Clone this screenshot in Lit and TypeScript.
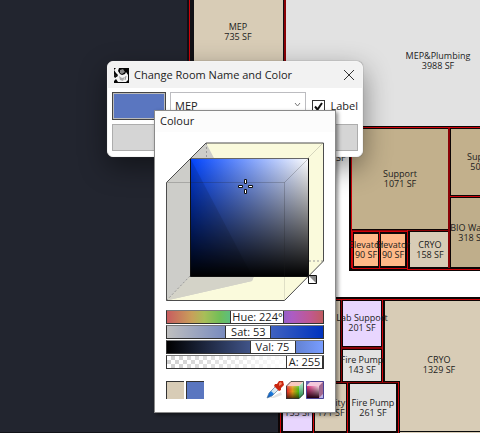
import { LitElement, html, css, svg } from "lit";
import { customElement, state } from "lit/decorators.js";
import { styleMap } from "lit/directives/style-map.js";

type Room = { x: number; y: number; w: number; h: number; fill: string };
type Tag = { x: number; y: number; name: string; area: string };

const TAN = "#d8ccb6";
const KHAKI = "#c2b08c";
const GREY = "#e2e2e2";
const LILAC = "#e8d6fe";
const ORANGE = "#ffb988";

const ROOMS: Room[] = [
  { x: 194, y: -4, w: 89, h: 130, fill: TAN },
  { x: 286, y: -4, w: 900, h: 130, fill: GREY },
  { x: 352, y: 129, w: 96, h: 100, fill: KHAKI },
  { x: 451, y: 129, w: 80, h: 66, fill: KHAKI },
  { x: 451, y: 198, w: 80, h: 69, fill: "#bfae8b" },
  { x: 354, y: 234, w: 24, h: 32, fill: ORANGE },
  { x: 381, y: 234, w: 24, h: 32, fill: ORANGE },
  { x: 410, y: 232, w: 38, h: 35, fill: TAN },
  { x: 300, y: 301, w: 40, h: 80, fill: TAN },
  { x: 343, y: 301, w: 38, h: 45, fill: LILAC },
  { x: 343, y: 350, w: 38, h: 31, fill: GREY },
  { x: 385, y: 301, w: 900, h: 80, fill: TAN },
  { x: 400, y: 380, w: 900, h: 500, fill: TAN },
  { x: 283, y: 384, w: 29, h: 47, fill: LILAC },
  { x: 315, y: 384, w: 31, h: 47, fill: TAN },
  { x: 350, y: 384, w: 46, h: 47, fill: GREY },
];

const WALLS = [
  "M189.5 0V126",
  "M340 127.5H2000", "M351.5 128V268", "M450 196.5H2000",
  "M352 231.5H407V268H352Z", "M379.5 232V268", "M407.5 230V269H2000",
  "M330 299.5H2000", "M382.5 300V382", "M398.5 382V433",
  "M280.5 384V440", "M313.5 384V433", "M347.5 383V433",
];

const SHADED_WALLS = [
  "M284.5 0V126", "M285.5 0V126", "M448.5 128V268", "M449.5 128V268", "M352 230.5H449",
  "M341.5 300V382", "M342 347.5H382", "M342 348.5H382", "M330 382.5H398",
];

const TAGS: Tag[] = [
  { x: 238, y: 30, name: "MEP", area: "735 SF" },
  { x: 438, y: 59, name: "MEP&Plumbing", area: "3988 SF" },
  { x: 332, y: 151, name: "Storage", area: "210 SF" },
  { x: 400, y: 177, name: "Support", area: "1071 SF" },
  { x: 484, y: 160, name: "Support", area: "504 SF" },
  { x: 472, y: 231, name: "BIO Waste", area: "318 SF" },
  { x: 366, y: 248, name: "Elevator", area: "90 SF" },
  { x: 393, y: 248, name: "Elevator", area: "90 SF" },
  { x: 430, y: 248, name: "CRYO", area: "158 SF" },
  { x: 362, y: 321, name: "Lab Support", area: "201 SF" },
  { x: 362, y: 363, name: "Fire Pump", area: "143 SF" },
  { x: 439, y: 363, name: "CRYO", area: "1329 SF" },
  { x: 298, y: 406, name: "Lab", area: "153 SF" },
  { x: 331, y: 406, name: "Facility", area: "171 SF" },
  { x: 373, y: 406, name: "Fire Pump", area: "261 SF" },
];

@customElement("floor-plan")
class FloorPlan extends LitElement {
  static styles = css`
    :host { display: block; overflow: hidden; }
    svg { display: block; width: 100%; height: 100%; }
    .tag { font: 9px "Open Sans", "Noto Sans", sans-serif; fill: #1c1c1c; text-anchor: middle; }
  `;
  render() {
    return html`<svg role="img" aria-label="Floor plan">
      <rect width="100%" height="100%" fill="#22252f" />
      <rect x="187" y="0" width="2000" height="128" fill="#101015" />
      <rect x="340" y="126" width="2000" height="310" fill="#fff" />
      <rect x="300" y="150" width="2000" height="280" fill="#fff" />
      <rect x="286" y="60" width="65" height="1" fill="#333" />
      <rect x="340" y="126" width="2000" height="3" fill="#0a0a0a" />
      <rect x="349" y="126" width="2000" height="145" fill="#0d0505" />
      <rect x="300" y="297" width="2000" height="85" fill="#0d0505" />
      <rect x="278" y="382" width="2000" height="52" fill="#0d0505" />
      <rect x="0" y="432" width="278" height="1" fill="#111318" />
      ${ROOMS.map((r) => svg`<rect x=${r.x} y=${r.y} width=${r.w} height=${r.h} fill=${r.fill} />`)}
      <g fill="none" stroke="#0a0a0a" shape-rendering="crispEdges">
        <path d="M384.5 301V382H399.5V434M400 431.5H2000" />
        <rect x="353.5" y="233.5" width="25" height="33" />
        <rect x="380.5" y="233.5" width="25" height="33" />
      </g>
      <g fill="none" stroke="#8a0206" shape-rendering="crispEdges">
        ${SHADED_WALLS.map((d) => svg`<path d=${d} />`)}
      </g>
      <g fill="none" stroke="#d0040a" shape-rendering="crispEdges">
        ${WALLS.map((d) => svg`<path d=${d} />`)}
      </g>
      ${TAGS.map((t) => svg`<text class="tag" x=${t.x} y=${t.y}>${t.name}<tspan x=${t.x} dy="10">${t.area}</tspan></text>`)}
    </svg>`;
  }
}

@customElement("room-dialog")
class RoomDialog extends LitElement {
  static styles = css`
    :host {
      display: block; box-sizing: border-box; overflow: hidden; border: 1px solid #f4f4f4; border-radius: 6px;
      background: #fff; box-shadow: 0 0 1px #555, 0 10px 28px rgba(0, 0, 0, 0.45);
      font: 11px/16px "Open Sans", "Noto Sans", sans-serif; color: #222;
    }
    * { box-sizing: border-box; }
    header { display: flex; align-items: center; gap: 5px; height: 26px; padding: 0 6px; background: #f2f2f2; }
    .logo { width: 15px; height: 15px; }
    h1 { flex: 1; margin: 0; font: inherit; }
    .close { border: 0; padding: 0; width: 14px; height: 14px; background: none; display: grid; place-items: center; }
    form { display: grid; gap: 4px; padding: 4px 4px 5px; }
    .row { display: flex; align-items: center; gap: 4px; }
    .chip { width: 54px; height: 28px; flex: none; background: #5a76c0; border: 1px solid #444; box-shadow: inset 0 0 0 1px #bbb; padding: 0; }
    .pick { position: relative; flex: 1; height: 28px; }
    select {
      appearance: none; width: 100%; height: 100%; border: 1px solid #bcbcc0; background: #fff;
      padding: 0 4px; border-radius: 0; font: inherit; color: #222;
    }
    .arrow { position: absolute; right: 5px; top: 10px; pointer-events: none; }
    label { display: flex; align-items: center; gap: 5px; padding-left: 2px; }
    input { appearance: none; width: 13px; height: 13px; margin: 0; border: 1px solid #333; background: #fff; }
    .box { position: relative; display: grid; }
    .box svg { position: absolute; inset: 0; pointer-events: none; }
    .wide { flex: 1; height: 27px; border: 1px solid #adadad; background: #d5d5d5; }
    .actions { gap: 5px; }
  `;
  render() {
    return html`
      <header>
        <svg class="logo" viewBox="0 0 15 15" aria-hidden="true">
          <path d="M0 0H15V15H0Z" fill="#050505" />
          <path d="M0 2L2 0H5L4 3 6 6 8 7 11 6 12 4 14 7 14 12 12 14H4L2 11 0 13V9L3 9 4 7 2 5Z" fill="#f5f5f5" />
          <path d="M6 2L9 1 11 4 8 6 6 5Z" fill="#888" />
          <path d="M5 8L8 10 11 9 9 13 6 12Z" fill="#aaa" />
          <path d="M0 6L3 8 1 10ZM12 8L11 12" fill="#111" stroke="#333" stroke-width=".5" />
        </svg>
        <h1>Change Room Name and Color</h1>
        <button class="close" aria-label="Close"><svg width="10" height="10"><path d="M0 0L10 10M10 0L0 10" stroke="#333" /></svg></button>
      </header>
      <form>
        <div class="row">
          <button type="button" class="chip" aria-label="Room colour"></button>
          <div class="pick">
            <select aria-label="Room name"><option>MEP</option></select>
            <svg class="arrow" width="7" height="6"><path d="M1 1L3.500 4 6 1" fill="none" stroke="#777" /></svg>
          </div>
          <label><span class="box"><input type="checkbox" checked /><svg width="13" height="13"><path d="M3 6.500L5.500 9.500 10 3" fill="none" stroke="#111" stroke-width="2" /></svg></span>Label</label>
        </div>
        <div class="row actions">
          <button type="button" class="wide" aria-label="OK"></button>
          <button type="button" class="wide" aria-label="Cancel"></button>
        </div>
      </form>`;
  }
}

type Channel = { key: string; text: string; value: number; max: number; width: number };

@customElement("colour-picker")
class ColourPicker extends LitElement {
  static styles = css`
    :host {
      display: block; box-sizing: border-box; border: 1px solid #8a8a8a; background: #fff;
      box-shadow: 2px 2px 4px rgba(0, 0, 0, 0.45); font: 11px/14px "Open Sans", "Noto Sans", sans-serif; color: #222;
    }
    * { box-sizing: border-box; }
    h2 { margin: 0; padding: 3px 5px 4px; font: inherit; background: #fcfcfc; }
    .body { padding: 10px 11px 13px; }
    .cube { display: block; width: 100%; height: auto; }
    .sliders { display: grid; gap: 1px; margin-top: 8px; }
    .slider { display: grid; height: 14px; border: 1px solid #333; border-top-color: #777; }
    .slider > * { grid-area: 1 / 1; min-width: 0; }
    .hue { background: linear-gradient(90deg, #c85c60, #c8a05a 16%, #a8be58 24%, #70be58 34%, #58be88 42%, #58bebe 50%, #5876c0 62%, #9060c8 74%, #ac5cc4 80%, #c05890 92%, #c05c60); }
    .sat { background: linear-gradient(90deg, #bfbfbf, #0033bf); }
    .val { background: linear-gradient(90deg, #000, #789dff); }
    .alpha { background: linear-gradient(90deg, #fff0, #fff 80%), repeating-conic-gradient(#cfcfcf 0 25%, #fff 0 50%) 0 0 / 8px 8px; }
    input { appearance: none; width: 100%; height: 12px; margin: 0; background: none; opacity: 0; }
    .over { display: flex; height: 12px; pointer-events: none; }
    output { flex: none; display: grid; place-items: center; height: 12px; line-height: 12px; background: #fff; border: solid #333; border-width: 0 1px; white-space: nowrap; }
    .foot { display: flex; gap: 2px; margin-top: 12px; }
    button { width: 18px; height: 18px; border: 0; padding: 0; background: none; }
    .swatch { border: 1px solid #333; border-width: 1px 0 0 1px; }
    .old { background: #d8ccb6; }
    .new { background: #5a76c0; }
    .gap { flex: 1; }
    .foot svg { display: block; }
  `;

  @state() private channels: Channel[] = [
    { key: "hue", text: "Hue: 224°", value: 224, max: 360, width: 54 },
    { key: "sat", text: "Sat: 53", value: 53, max: 100, width: 46 },
    { key: "val", text: "Val: 75", value: 75, max: 100, width: 46 },
    { key: "alpha", text: "A: 255", value: 255, max: 255, width: 37 },
  ];

  private cube() {
    return html`<svg class="cube" viewBox="0 0 158 160" role="img" aria-label="Saturation and value">
      <defs>
        <linearGradient id="s"><stop stop-color="#04f" /><stop offset="1" stop-color="#fff" /></linearGradient>
        <linearGradient id="v" x2="0" y2="1"><stop stop-color="#000" stop-opacity="0" /><stop offset="1" /></linearGradient>
      </defs>
      <path d="M.5 40.500L40 1H157.500V119L118.500 158.500H.5Z" fill="#fafadc" />
      <path d="M.5 40.500L40 1 48 16 88 134 86 139 .5 158.500Z" fill="#cdcdc9" />
      <path d="M24 134H88L86 139 .5 158.500Z" fill="#d4d3c8" />
      <path d="M40.500 1V16M143 119H157M24 134L.5 158.500" fill="none" stroke="#999" stroke-dasharray="2 2" />
      <path d="M157 1L142 16" stroke="#d5d5bd" />
      <path d="M118.500 134V158" stroke="#dfdfc6" />
      <path d="M24.500 16.500H142.500V134.500H24.500Z" fill="url(#s)" />
      <path d="M24.500 16.500H142.500V134.500H24.500Z" fill="url(#v)" />
      <path d="M24.500 16.500L86 134H24.500Z" fill="#000" opacity=".12" />
      <path d="M.5 40.500H118.500V134M118.500 40.500L142 17" fill="none" stroke="#222" opacity=".22" />
      <path d="M24.500 16.500H142.500V134.500H24.500Z" fill="none" stroke="#111" />
      <path d="M24 16.500H142" stroke="#666" />
      <path d="M.5 40.500L40 1H157.500V119L118.500 158.500H.5Z" fill="none" stroke="#4d4d4d" />
      <path d="M78.500 37.500h2v4h-2ZM78.500 47.500h2v4h-2ZM72.500 43.500h4v2h-4ZM82.500 43.500h4v2h-4Z" fill="#fff" stroke="#111" />
      <path d="M142.500 133.500H150.500V141.500H142.500Z" fill="#fff" stroke="#111" />
      <path d="M143 134H150V141Z" fill="#888" />
    </svg>`;
  }

  render() {
    return html`
      <h2>Colour</h2>
      <div class="body">
        ${this.cube()}
        <div class="sliders">
          ${this.channels.map((c) => html`<div class="slider ${c.key}">
            <input type="range" id=${c.key} aria-label=${c.key} max=${c.max} .value=${String(c.value)} />
            <div class="over">
              <span style=${styleMap({ flex: `${c.value} 0 0` })}></span>
              <output for=${c.key} style=${styleMap({ width: `${c.width}px` })}>${c.text}</output>
              <span style=${styleMap({ flex: `${c.max - c.value} 0 0` })}></span>
            </div>
          </div>`)}
        </div>
        <div class="foot">
          <button class="swatch old" aria-label="Original colour"></button>
          <button class="swatch new" aria-label="New colour"></button>
          <span class="gap"></span>
          <button aria-label="Eyedropper"><svg width="18" height="18">
            <defs><linearGradient id="d" x1="1" y1="0" x2="0" y2="1"><stop stop-color="#f4fafd" /><stop offset=".5" stop-color="#cfe2ee" /><stop offset=".58" stop-color="#1c7ce0" /><stop offset="1" stop-color="#064db0" /></linearGradient></defs>
            <path d="M4 17L15 11 16 14 8 17Z" fill="#e4e4e4" />
            <path d="M1 17L3 12 10 5 13 8 6 15Z" fill="url(#d)" stroke="#567a9c" stroke-width=".7" />
            <path d="M9 3L11 3 13 0H17L18 4 15 7V9L13 10 8 5Z" fill="#c9260f" />
            <path d="M13 2L15 1 16 3 13 5Z" fill="#f58468" />
          </svg></button>
          <button aria-label="Colour cube"><svg width="18" height="18">
            <defs>
              <linearGradient id="r"><stop stop-color="#e8102c" /><stop offset=".5" stop-color="#e89a18" /><stop offset="1" stop-color="#40c010" /></linearGradient>
              <linearGradient id="k" x2="0" y2="1"><stop stop-color="#ffd" stop-opacity=".3" /><stop offset=".4" stop-color="#330" stop-opacity="0" /><stop offset="1" stop-color="#210" stop-opacity=".8" /></linearGradient>
              <linearGradient id="g" x2="0" y2="1"><stop stop-color="#c8f8e0" /><stop offset="1" stop-color="#18803c" /></linearGradient>
            </defs>
            <path d="M0 5L5 0H18L13 5Z" fill="#fac8c0" />
            <path d="M13 5L18 0V13L13 18Z" fill="url(#g)" />
            <path d="M0 5H13V18H0Z" fill="url(#r)" /><path d="M0 5H13V18H0Z" fill="url(#k)" />
            <path d="M.5 18V5L5 .5H17.500V13L13 17.500H0" fill="none" stroke="#333" stroke-width=".8" />
          </svg></button>
          <button aria-label="Shade cube"><svg width="18" height="18">
            <defs>
              <linearGradient id="m"><stop stop-color="#e03080" /><stop offset="1" stop-color="#f8d8e8" /></linearGradient>
              <linearGradient id="n" x2="0" y2="1"><stop stop-color="#201" stop-opacity="0" /><stop offset="1" stop-color="#201" /></linearGradient>
            </defs>
            <path d="M0 0H18V18H0Z" fill="#b8b4e8" />
            <path d="M0 5L5 0H17V13L13 17H0Z" fill="#f4c8dc" />
            <path d="M13 5L17 1V13L13 17Z" fill="#a06890" />
            <path d="M1 5H13V17H1Z" fill="url(#m)" /><path d="M1 5H13V17H1Z" fill="url(#n)" />
            <path d="M.5 .5H17.500V17.500H.5Z" fill="none" stroke="#4a4294" />
            <path d="M0 0H5L0 5Z" fill="#6660ac" />
          </svg></button>
        </div>
      </div>`;
  }
}

@customElement("app-root")
class AppRoot extends LitElement {
  static styles = css`
    :host { display: block; position: relative; height: 100vh; overflow: hidden; }
    floor-plan { height: 100%; }
    room-dialog { position: absolute; left: 107px; top: 61px; width: 256px; }
    colour-picker { position: absolute; left: 154px; top: 110px; width: 182px; }
  `;
  render() {
    return html`<floor-plan></floor-plan><room-dialog></room-dialog><colour-picker></colour-picker>`;
  }
}
